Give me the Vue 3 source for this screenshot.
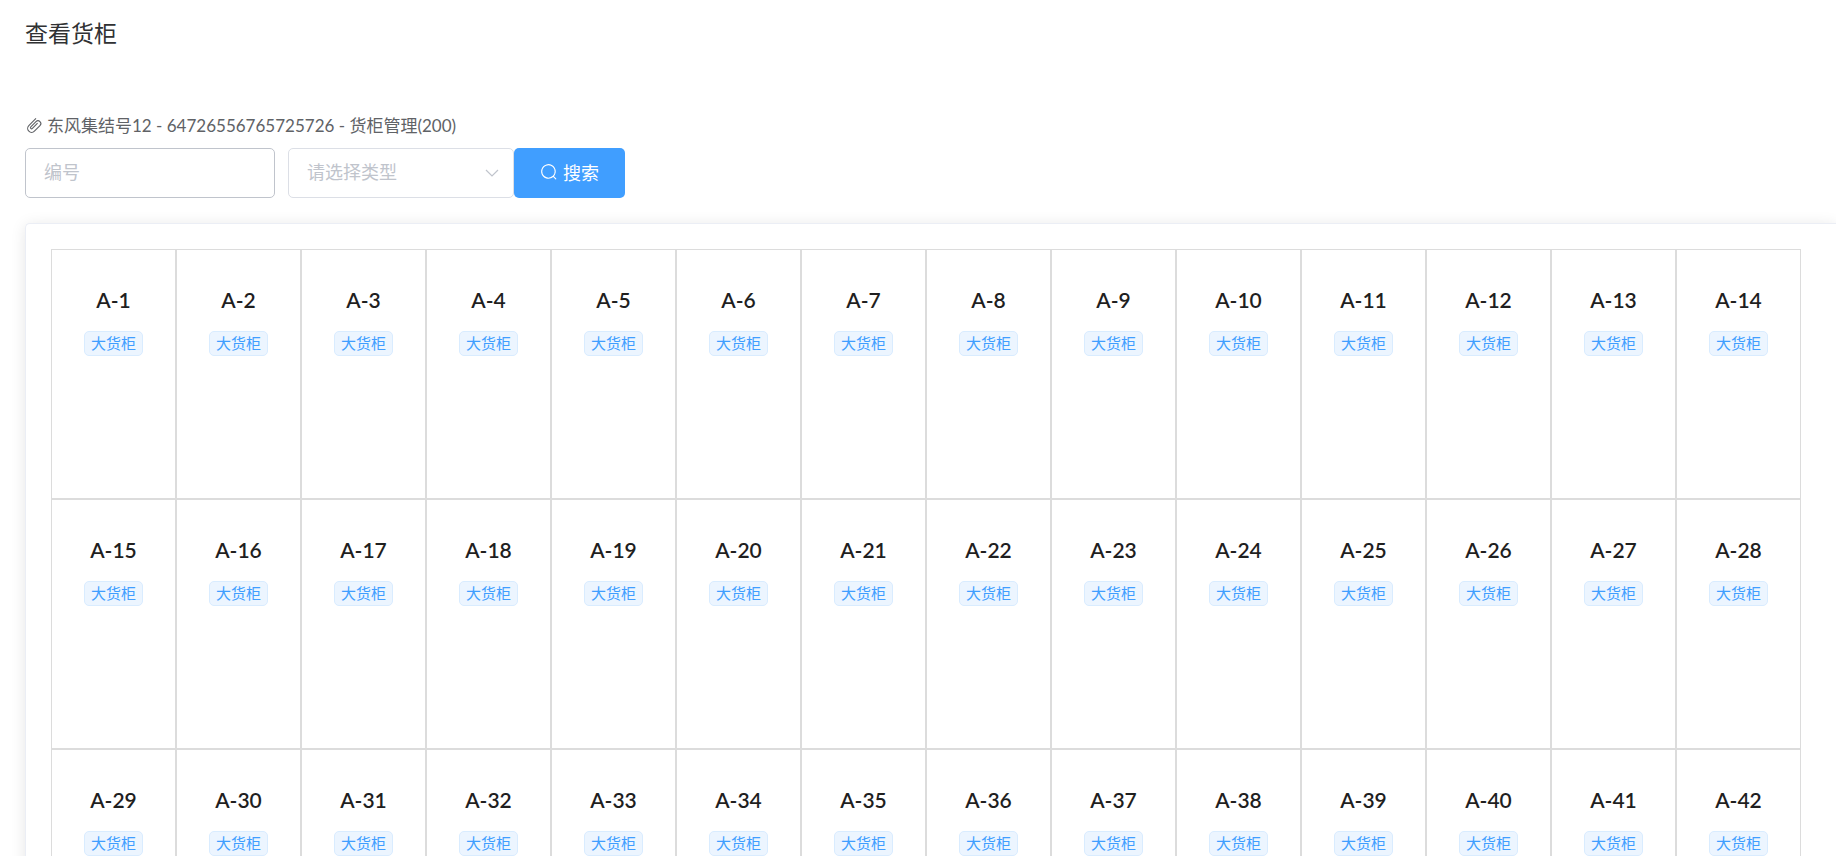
<script setup>
import { ref } from 'vue'

const code = ref('')
const type = ref('')
const cabinets = Array.from({ length: 42 }, (_, i) => ({ name: `A-${i + 1}`, type: '大货柜' }))
</script>

<template>
  <div class="page">
    <header class="header">
      <h1 class="title">查看货柜</h1>
    </header>
    <main class="body">
      <p class="meta">
        <svg class="icon" viewBox="0 0 1024 1024" aria-hidden="true">
          <path
            fill="currentColor"
            d="M602.496 240.448A192 192 0 1 1 874.048 512l-316.8 316.8A256 256 0 0 1 195.2 466.752L602.496 59.456l45.248 45.248L240.448 512A192 192 0 0 0 512 783.552l316.8-316.8a128 128 0 1 0-181.056-181.056L353.6 579.904a32 32 0 1 0 45.248 45.248l294.144-294.144 45.312 45.248L444.096 670.4a96 96 0 1 1-135.744-135.744l294.144-294.208z"
          />
        </svg>
        <span>东风集结号12 - 64726556765725726 - 货柜管理(200)</span>
      </p>
      <form class="search" @submit.prevent>
        <input v-model="code" class="field code" type="text" placeholder="编号" aria-label="编号" />
        <div class="select-box">
          <select v-model="type" class="field type" aria-label="请选择类型">
            <option value="">请选择类型</option>
            <option value="large">大货柜</option>
          </select>
          <svg class="arrow" viewBox="0 0 18 18" aria-hidden="true">
            <path d="M3 6l6 6 6-6" fill="none" stroke="currentColor" stroke-width="1.2" />
          </svg>
        </div>
        <button class="submit" type="submit">
          <svg class="icon" viewBox="0 0 1024 1024" aria-hidden="true">
            <path
              fill="currentColor"
              d="m795.904 750.72 124.992 124.928a32 32 0 0 1-45.248 45.248L750.656 795.904a416 416 0 1 1 45.248-45.248zM480 832a352 352 0 1 0 0-704 352 352 0 0 0 0 704z"
            />
          </svg>
          <span>搜索</span>
        </button>
      </form>
      <section class="card">
        <ul class="grid">
          <li v-for="item in cabinets" :key="item.name" class="cell">
            <h2 class="name">{{ item.name }}</h2>
            <span class="tag">{{ item.type }}</span>
          </li>
        </ul>
      </section>
    </main>
  </div>
</template>

<style>
html,
body {
  overflow: hidden;
}
</style>

<style scoped>
.page {
  height: 100vh;
  overflow: hidden;
  background: #fff;
  color: #606266;
  font-family: Lato, "Noto Sans CJK SC", sans-serif;
  font-size: 17px;
  font-weight: 400;
}
.page * {
  box-sizing: border-box;
}
.header {
  padding: 16px 25px 0;
}
.title {
  margin: 0;
  color: #303133;
  font-size: 23px;
  font-weight: 400;
  line-height: 34px;
}
.body {
  padding: 62px 0 0 25px;
}
.meta {
  display: flex;
  align-items: center;
  gap: 4px;
  margin: 0 0 8px;
  line-height: 28px;
}
.icon {
  width: 18px;
  height: 18px;
  flex: none;
}
.search {
  display: flex;
  margin-bottom: 25px;
  font-size: 18px;
}
.field {
  height: 50px;
  padding: 0 18px 2px;
  border: 1px solid #dcdfe6;
  border-radius: 5px;
  background: #fff;
  font: inherit;
  outline: none;
}
.code {
  width: 250px;
  margin-right: 13px;
  border-color: #c0c4cc;
  color: #606266;
}
.code::placeholder {
  color: #c0c4cc;
}
.select-box {
  position: relative;
  width: 226px;
}
.type {
  width: 100%;
  appearance: none;
  color: #c0c4cc;
}
.arrow {
  position: absolute;
  top: 16px;
  right: 13px;
  width: 18px;
  height: 18px;
  color: #c0c4cc;
  pointer-events: none;
}
.submit {
  display: flex;
  align-items: center;
  gap: 5px;
  height: 50px;
  padding: 0 26px 2px;
  border: 0;
  border-radius: 5px;
  background: #409eff;
  color: #fff;
  font: inherit;
}
.card {
  padding: 25px;
  border: 1px solid #ebeef5;
  border-right: 0;
  border-radius: 5px 0 0 0;
  background: #fff;
  box-shadow: 0 2px 15px rgba(0, 0, 0, 0.1);
}
.grid {
  display: grid;
  grid-template-columns: repeat(auto-fill, 125px);
  margin: 0;
  padding: 0;
  list-style: none;
}
.cell {
  display: flex;
  flex-direction: column;
  align-items: center;
  height: 250px;
  padding-top: 33px;
  border: 1px solid #dcdcdc;
}
.name {
  margin: 0 0 14px;
  color: #1f1f1f;
  font-size: 21px;
  font-weight: 600;
  line-height: 34px;
}
.tag {
  height: 25px;
  padding: 0 6px;
  border: 1px solid #d9ecff;
  border-radius: 5px;
  background: #ecf5ff;
  color: #409eff;
  font-size: 15px;
  line-height: 22px;
}
</style>
